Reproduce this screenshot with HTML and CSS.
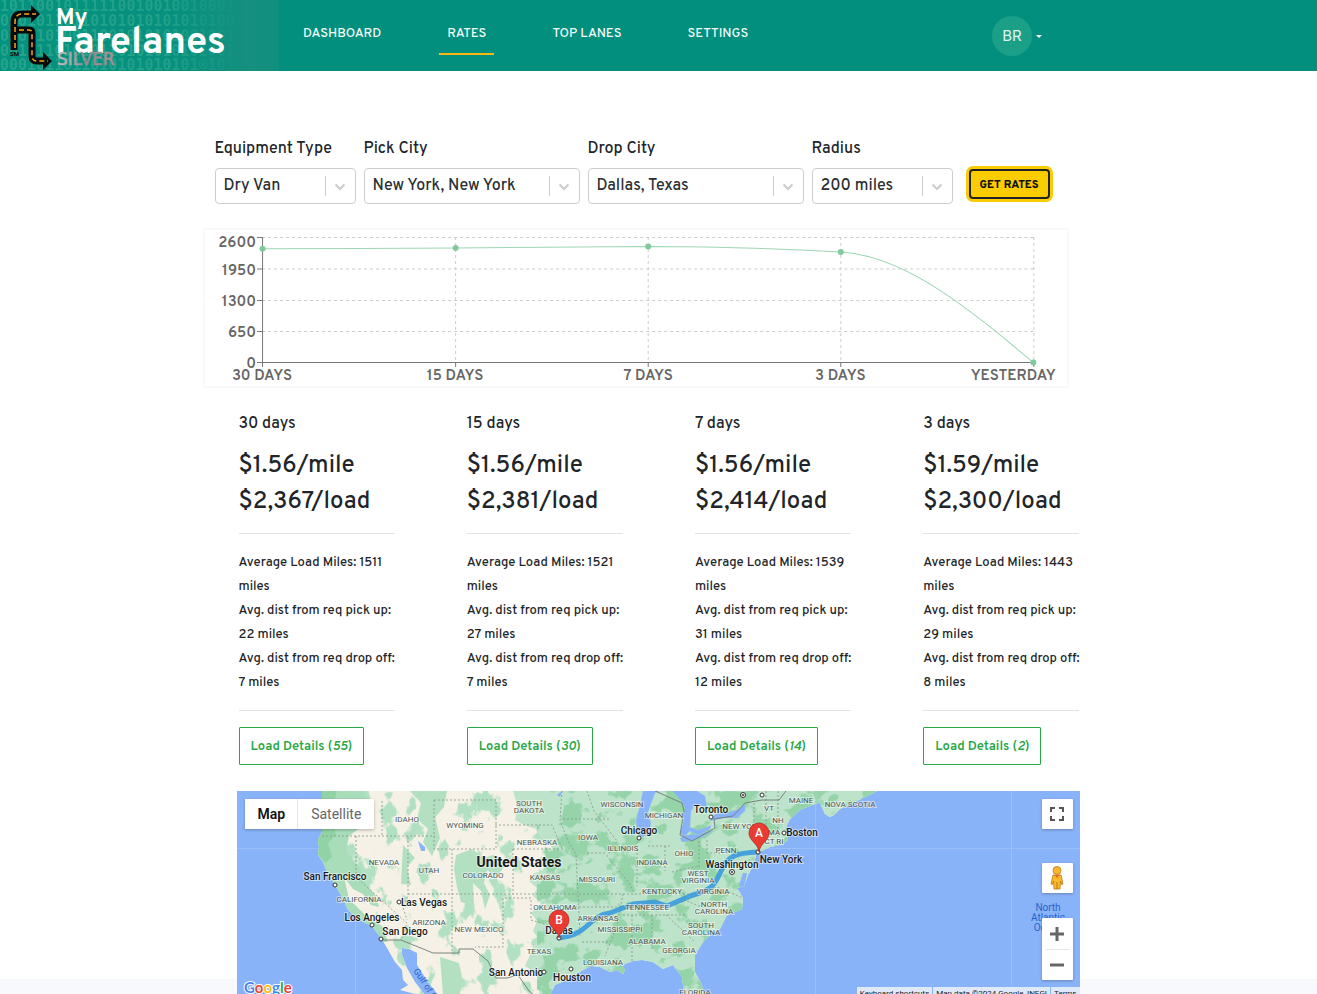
FILE: index.html
```html
<!DOCTYPE html>
<html lang="en">
<head>
<meta charset="utf-8">
<meta name="viewport" content="width=device-width, initial-scale=1">
<title>My Farelanes - Rates</title>
<link rel="stylesheet" href="styles.css">
</head>
<body>
<header class="topbar">
  <a class="brand" href="#" aria-label="My Farelanes Silver">
    <svg class="brand-art" viewBox="0 0 279 71" width="279" height="71">
      <defs>
        <linearGradient id="fade" x1="0" x2="279" gradientUnits="userSpaceOnUse">
          <stop offset="0" stop-color="#fff" stop-opacity=".9"/><stop offset=".6" stop-color="#fff" stop-opacity=".75"/>
          <stop offset=".88" stop-color="#fff" stop-opacity="0"/>
        </linearGradient>
        <linearGradient id="panel"><stop offset="0" stop-color="#03937f"/><stop offset=".65" stop-color="#07907e"/><stop offset=".9" stop-color="#158f80"/><stop offset="1" stop-color="#108f7f"/></linearGradient>
        <linearGradient id="silver"><stop offset="0" stop-color="#c9bfc2"/><stop offset=".5" stop-color="#8f8b91"/><stop offset="1" stop-color="#b08d94"/></linearGradient>
        <mask id="fademask"><rect width="279" height="71" fill="url(#fade)"/></mask>
      </defs>
      <rect width="279" height="71" fill="url(#panel)"/>
      <g class="bits" mask="url(#fademask)">
        <text x="0" y="11">10110010111110010010010001</text>
        <text x="0" y="26">01010110110101010101010100</text>
        <text x="0" y="41">01001010011001010101001001</text>
        <text x="0" y="56">00101101010110101010101001</text>
        <text x="0" y="70">0001011011010101010101®101</text>
      </g>
      <g fill="none" stroke="#080808" stroke-width="7">
        <path d="M14 50V22Q14 14 22 14H33"/><path d="M17 30H29Q32 30 32 33V56Q32 61 37 61H45"/>
      </g>
      <path d="M31 5 40 14 31 23ZM43 52 52 61 43 70Z" fill="#080808"/>
      <g fill="none" stroke="#f5a81c" stroke-width="1.5" stroke-dasharray="5 3">
        <path d="M15 48V22Q15 14 22 14H36"/><path d="M19 30H29Q32 30 32 33V56Q32 61 37 61H48"/>
      </g>
      <text class="sm" x="10" y="56">SM</text>
      <text class="word" x="56" y="24" font-size="23">My</text>
      <text class="word" x="55" y="53" font-size="38">Farelanes</text>
      <text class="silver" x="57" y="65">SILVER</text>
    </svg>
  </a>
  <nav class="nav">
    <a href="#">DASHBOARD</a>
    <a href="#" class="active" aria-current="page">RATES</a>
    <a href="#">TOP LANES</a>
    <a href="#">SETTINGS</a>
  </nav>
  <button class="account" type="button" aria-label="Account BR"><span class="avatar">BR</span><span class="caret"></span></button>
</header>

<main class="page">
  <div class="content">
    <form class="filters">
      <div class="field"><label for="equipment">Equipment Type</label>
        <div class="pick"><select id="equipment"><option>Dry Van</option></select><svg viewBox="0 0 12 8"><path d="M1.500 1.500 6 6 10.500 1.500"/></svg></div></div>
      <div class="field wide"><label for="pickup">Pick City</label>
        <div class="pick"><select id="pickup"><option>New York, New York</option></select><svg viewBox="0 0 12 8"><path d="M1.500 1.500 6 6 10.500 1.500"/></svg></div></div>
      <div class="field wide"><label for="drop">Drop City</label>
        <div class="pick"><select id="drop"><option>Dallas, Texas</option></select><svg viewBox="0 0 12 8"><path d="M1.500 1.500 6 6 10.500 1.500"/></svg></div></div>
      <div class="field"><label for="radius">Radius</label>
        <div class="pick"><select id="radius"><option>200 miles</option></select><svg viewBox="0 0 12 8"><path d="M1.500 1.500 6 6 10.500 1.500"/></svg></div></div>
      <button class="get" type="button">GET RATES</button>
    </form>

    <section class="chart" aria-label="Rate history">
      <svg viewBox="0 0 862 156">
        <path class="grid" d="M57 7.500H828M57 39H828M57 70.500H828M57 101.500H828M250.500 7V132M443 7V132M635.500 7V132M828.500 7V132"/>
        <path class="axis" d="M57.500 7V137M52 132.500H828M52 7.500H57M52 39H57M52 70.500H57M52 101.500H57M250.500 132V137M443 132V137M635.500 132V137M828.500 132V137"/>
        <path class="line" d="M57.500 18.700C122 18.700 186 18.400 250.500 18S379 16.400 443 16.400 571 18.300 635.500 22C700 25.700 764 79 828 132.500"/>
        <g class="dots"><circle cx="57.500" cy="18.700" r="3"/><circle cx="250.500" cy="18" r="3"/><circle cx="443" cy="16.400" r="3"/><circle cx="635.500" cy="22" r="3"/><circle cx="828" cy="132.500" r="3"/></g>
        <g class="ylab"><text x="51" y="17">2600</text><text x="51" y="45">1950</text><text x="51" y="76">1300</text><text x="51" y="107">650</text><text x="51" y="138">0</text></g>
        <g class="xlab"><text x="57" y="150">30 DAYS</text><text x="250" y="150">15 DAYS</text><text x="443" y="150">7 DAYS</text><text x="635" y="150">3 DAYS</text><text x="808" y="150">YESTERDAY</text></g>
      </svg>
    </section>

    <section class="cards">
      <article class="card"><h2>30 days</h2><p class="price">$1.56/mile<br>$2,367/load</p>
        <p class="facts">Average Load Miles: 1511<br>miles<br>Avg. dist from req pick up:<br>22 miles<br>Avg. dist from req drop off:<br>7 miles</p>
        <button type="button">Load Details (<em>55</em>)</button></article>
      <article class="card"><h2>15 days</h2><p class="price">$1.56/mile<br>$2,381/load</p>
        <p class="facts">Average Load Miles: 1521<br>miles<br>Avg. dist from req pick up:<br>27 miles<br>Avg. dist from req drop off:<br>7 miles</p>
        <button type="button">Load Details (<em>30</em>)</button></article>
      <article class="card"><h2>7 days</h2><p class="price">$1.56/mile<br>$2,414/load</p>
        <p class="facts">Average Load Miles: 1539<br>miles<br>Avg. dist from req pick up:<br>31 miles<br>Avg. dist from req drop off:<br>12 miles</p>
        <button type="button">Load Details (<em>14</em>)</button></article>
      <article class="card"><h2>3 days</h2><p class="price">$1.59/mile<br>$2,300/load</p>
        <p class="facts">Average Load Miles: 1443<br>miles<br>Avg. dist from req pick up:<br>29 miles<br>Avg. dist from req drop off:<br>8 miles</p>
        <button type="button">Load Details (<em>2</em>)</button></article>
    </section>

    <section class="map" aria-label="Route map">
      <svg class="map-art" viewBox="0 0 843 210" preserveAspectRatio="xMidYMid slice">
        <defs>
          <clipPath id="land">
            <path d="M85 0V41L81 49 82 56 81 64 86 71 90 81 98 94 105 106 111 119 121 128 135 135 144 147 150 157 158 171 165 179 166 189 171 194 163 199 178 203 184 210H188V204L178 191 170 177 165 164V157L172 158 180 162V174L191 191 202 205 206 210H312L313 204 318 194 330 189 346 179 354 175 363 176 373 181 380 179 386 183 388 179 385 174 396 170 405 169 416 171 426 178 436 174 445 186 446 194 450 210H467L465 194 458 181V164L466 151 474 143 483 138 490 124 498 121 505 118 506 107 500 97 507 95 511 84 515 77 520 62 533 56 544 54 551 49 548 38 553 28 563 19 575 14 581 12 582 10 588 23 593 26 597 24 603 18 618 11 630 5 640 0Z"/>
          </clipPath>
          <filter id="veg" x="0" y="0" width="100%" height="100%" color-interpolation-filters="sRGB"><feTurbulence type="fractalNoise" baseFrequency=".04 .045" numOctaves="4" seed="8"/><feColorMatrix values="0 0 0 0 .58  0 0 0 0 .83  0 0 0 0 .66  14 0 0 0 -7.100"/></filter>
          <filter id="west" x="0" y="0" width="100%" height="100%" color-interpolation-filters="sRGB"><feTurbulence type="fractalNoise" baseFrequency=".05 .035" numOctaves="4" seed="21"/><feColorMatrix values="0 0 0 0 .70  0 0 0 0 .88  0 0 0 0 .76  14 0 0 0 -8"/></filter>
        </defs>
        <rect width="843" height="210" fill="#89b3f8"/>
        <path class="tile" d="M0 57.500H843M578.500 0V210M774.500 0V210M118.500 0V210"/>
        <g clip-path="url(#land)">
          <rect width="660" height="210" fill="#f5f1e6"/>
          <rect width="330" height="210" filter="url(#west)"/>
          <path d="M276 0 281 16 278 29 287 34 299 38 305 49 314 55 318 63 310 70 308 80 297 82 292 90 300 97 296 105 304 112 294 122 300 130 296 140 301 147 295 158 292 166 288 175 301 184 303 210H660V0Z" fill="#bde3ca"/>
          <path d="M81 0H126L131 12 121 22 125 35 112 45 109 60 123 77 127 91 139 105 142 116 134 114 126 103 116 98 107 86 112 108 130 126 145 135 151 151 144 151 130 137 109 126 78 81Z" fill="#a9ddba"/>
          <path d="M81 0H100L96 14 104 20 96 31 99 44 91 52 95 66 88 72 78 60Z" fill="#92d3a6"/>
          <path d="M173 0H210L207 16 198 26 203 47 195 65 186 51 191 38 180 28 184 12ZM219 64 235 58 247 67 256 64 270 71 260 86 250 79 247 92 253 104 248 118 244 100 236 92 237 115 224 111 220 96 217 78ZM203 166 222 172 226 190 221 210 206 204ZM166 54 178 67 170 76 174 94 164 93Z" fill="#b3e0c0"/>
          <rect x="300" width="360" height="210" filter="url(#veg)"/>
          <path d="M406 0 403 14 399 30 400 41 403 46 411 44 414 33 411 21 418 2 423 0ZM436 0 445 11 448 17 446 33 443 42 447 46 453 40 461 44 473 40 474 34 468 37 460 39 453 36 454 20 458 14 470 16 468 5 460 0ZM443 47 450 44 463 43 473 38 474 41 463 47 453 50 445 51ZM473 30 478 23 490 22 502 18 508 13 508 20 500 27 487 27ZM506 82 510 82 508 92 505 100 502 94ZM181 50 188 56 188 60 184 60ZM325 0 323 6 320 4Z" fill="#89b3f8"/>
          <path class="state" d="M85 45H198M145 10V45M119 45V86L170 132 164 149M171 46V104L166 116 170 129M197 9H259V58H197ZM215 58V160M171 103H338M276 58V103M266 107V156H238M258 34H315L325 57M268 107H294V129L340 143M276 58H326M325 0 323 29 331 50 339 63 343 145M326 28H372M350 62H368M350 0 357 20 380 50 370 65 392 92 398 103M338 103H480M338 116H385M386 103 380 135 368 165M395 124V170M415 124V160M386 124H450M428 55V80M411 55H435M400 50V95M462 50V76M435 81 462 75M470 49V62H519M440 113 480 96 506 107M429 124 458 151M450 110 480 122M345 151H373M517 12V49M529 0V45M541 0V45M517 44H545"/>
          <path class="border" d="M144 149H164L196 162H222V158H236L251 170 259 187 270 187 281 184 292 200 300 207M418 0 445 12 447 20 443 44 455 50 478 37 477 28 496 25 508 12 525 9H542L549 0"/>
        </g>
        <path class="route" d="M521 61C500 62 491 64 484 80S474 99 453 105L430 115 418 111 396 113 373 122C350 125 354 143 322 147"/>
        <g class="region">
          <text x="170" y="31">IDAHO</text><text x="228" y="37">WYOMING</text><text x="292" y="15">SOUTH</text><text x="292" y="22">DAKOTA</text><text x="385" y="16">WISCONSIN</text><text x="427" y="27">MICHIGAN</text>
          <text x="147" y="74">NEVADA</text><text x="192" y="82">UTAH</text><text x="246" y="87">COLORADO</text><text x="300" y="54">NEBRASKA</text><text x="351" y="49">IOWA</text><text x="386" y="60">ILLINOIS</text><text x="447" y="65">OHIO</text><text x="415" y="74">INDIANA</text><text x="308" y="89">KANSAS</text><text x="360" y="91">MISSOURI</text>
          <text x="122" y="111">CALIFORNIA</text><text x="192" y="134">ARIZONA</text><text x="242" y="141">NEW MEXICO</text><text x="318" y="119">OKLAHOMA</text><text x="361" y="130">ARKANSAS</text><text x="425" y="103">KENTUCKY</text><text x="410" y="119">TENNESSEE</text><text x="383" y="141">MISSISSIPPI</text><text x="410" y="153">ALABAMA</text><text x="442" y="162">GEORGIA</text><text x="366" y="174">LOUISIANA</text><text x="302" y="163">TEXAS</text><text x="458" y="204">FLORIDA</text>
          <text x="461" y="85">WEST</text><text x="461" y="92">VIRGINIA</text><text x="476" y="103">VIRGINIA</text><text x="477" y="116">NORTH</text><text x="477" y="123">CAROLINA</text><text x="464" y="137">SOUTH</text><text x="464" y="144">CAROLINA</text><text x="489" y="62">PENN</text><text x="505" y="38">NEW YORK</text><text x="532" y="20">VT</text><text x="541" y="32">NH</text><text x="537" y="44">MA</text><text x="537" y="53">CT RI</text><text x="564" y="12">MAINE</text><text x="613" y="16">NOVA SCOTIA</text>
        </g>
        <g class="city">
          <text x="98" y="89">San Francisco</text><text x="187" y="115">Las Vegas</text><text x="135" y="130">Los Angeles</text><text x="168" y="144">San Diego</text><text x="279" y="185">San Antonio</text><text x="335" y="190">Houston</text><text x="322" y="143">Dallas</text><text x="402" y="43">Chicago</text><text x="474" y="22">Toronto</text><text x="495" y="77">Washington</text><text x="544" y="72">New York</text><text x="565" y="45">Boston</text>
          <text class="country" x="282" y="76">United States</text>
        </g>
        <g class="spots"><circle cx="98" cy="94" r="2"/><circle cx="162" cy="111" r="2"/><circle cx="135" cy="134" r="2"/><circle cx="144" cy="148" r="2"/><circle cx="307" cy="181" r="2"/><circle cx="334" cy="178" r="2"/><circle cx="402" cy="47" r="2"/><circle cx="474" cy="26" r="2"/><circle cx="547" cy="42" r="2"/><circle cx="525" cy="4" r="2"/><circle cx="506" cy="4" r="2.500"/><circle cx="506" cy="4" r=".7"/><circle cx="495" cy="81" r="2.500"/><circle cx="495" cy="81" r=".7"/><circle cx="521" cy="61" r="2"/><circle cx="322" cy="147" r="2"/></g>
        <g class="sea"><text x="811" y="120">North</text><text x="811" y="130">Atlantic</text><text x="811" y="140">Ocean</text><text class="gulf" transform="translate(176 180) rotate(56)">Gulf of California</text></g>
        <g class="pin"><path d="M522 61C521 52 512 50 512 42A10 10 0 0 1 532 42C532 50 523 52 522 61Z"/><path d="M322 147C321 139 312 137 312 129A10 10 0 0 1 332 129C332 137 323 139 322 147Z"/><text x="522" y="46">A</text><text x="322" y="133">B</text></g>
        <g class="google"><text x="7" y="202"><tspan fill="#4285f4">G</tspan><tspan fill="#ea4335">o</tspan><tspan fill="#fbbc05">o</tspan><tspan fill="#4285f4">g</tspan><tspan fill="#34a853">l</tspan><tspan fill="#ea4335">e</tspan></text></g>
      </svg>
      <div class="types"><button type="button" class="on">Map</button><button type="button">Satellite</button></div>
      <div class="tools">
        <button type="button" class="tool" aria-label="Full screen"><svg viewBox="0 0 14 14" width="14" height="14"><path d="M1 5V1H5M9 1H13V5M13 9V13H9M5 13H1V9" fill="none" stroke="#555" stroke-width="2"/></svg></button>
        <button type="button" class="tool person" aria-label="Street view"><svg viewBox="0 0 14 24" width="14" height="24"><path d="M3 9H11L13 18 11.500 18.500 10.500 15 10 23H4L3.500 15 2.500 18.500 1 18Z" fill="#fbb829" stroke="#b77a1b" stroke-width=".8"/><circle cx="7" cy="4.500" r="4" fill="#fbb829" stroke="#b77a1b" stroke-width=".8"/><path d="M4.500 9 7 12 9.500 9Z" fill="#e8672c"/><path d="M7 16V23" stroke="#b77a1b"/></svg></button>
        <div class="zoom"><button type="button" aria-label="Zoom in"><svg viewBox="0 0 14 14" width="14" height="14"><path d="M7 0V14M0 7H14" stroke="#666" stroke-width="3"/></svg></button><button type="button" aria-label="Zoom out"><svg viewBox="0 0 14 14" width="14" height="14"><path d="M0 7H14" stroke="#666" stroke-width="3"/></svg></button></div>
      </div>
      <div class="credits"><button type="button">Keyboard shortcuts</button><span>Map data ©2024 Google, INEGI</span><a href="#">Terms</a></div>
    </section>
  </div>
</main>
</body>
</html>
```
FILE: styles.css
```css
* { box-sizing: border-box; }
body { margin: 0; height: 100vh; overflow: hidden; background: #f8f9fc; color: #212529; font-family: Overpass, Roboto, sans-serif; font-weight: 500; }
button, select { font: inherit; color: inherit; }
button { cursor: pointer; }

.topbar { display: flex; align-items: flex-start; background: #028f7d; height: 71px; }
.brand, .brand-art { display: block; }
.bits text { font: bold 15px "DejaVu Sans Mono", monospace; fill: #2aa58d; }
.sm { font: bold 6px Roboto, sans-serif; fill: #080808; }
.word { font-family: Overpass, Roboto, sans-serif; font-weight: 700; fill: #fff; }
.silver { font: 17px "DejaVu Sans", sans-serif; fill: url(#silver); stroke: url(#silver); stroke-width: .5px; }
.nav { display: flex; gap: 50px; margin: 11px 0 0 16px; }
.nav a { padding: 14px 8px 10px; border-bottom: 2px solid transparent; color: #f1faf8; font-size: 13px; line-height: 18px; text-decoration: none; white-space: nowrap; }
.nav .active { border-color: #fdb714; }
.account { display: flex; align-items: center; gap: 4px; margin: 16px 275px 0 auto; padding: 0; border: 0; background: none; }
.avatar { width: 40px; height: 40px; border-radius: 50%; background: #1b9f87; color: #e0f4ef; font: 15px/40px Inter, sans-serif; }
.caret { border: 3px solid transparent; border-top-color: #fff; border-bottom: 0; }

.page { height: calc(100vh - 86px); background: #fff; }
.content { max-width: 912px; margin: 0 auto; padding-top: 66px; }
.filters { display: flex; gap: 8px; align-items: flex-end; padding: 0 65px 0 12px; }
.field { flex: 141 1 0; min-width: 0; }
.wide { flex-grow: 216; }
.field label { display: block; margin-bottom: 7px; font-size: 16px; line-height: 24px; }
.pick { position: relative; }
.pick select { display: block; width: 100%; height: 36px; padding: 0 38px 0 8px; border: 1px solid #ccc; border-radius: 4px; background: #fff; color: #2b2f33; appearance: none; font-size: 16px; }
.pick::after { content: ""; position: absolute; top: 8px; bottom: 8px; right: 30px; width: 1px; background: #ccc; }
.pick svg { position: absolute; right: 10px; top: 15px; width: 12px; height: 8px; fill: none; stroke: #ccc; stroke-width: 2; }
.get { flex: none; width: 81px; height: 30px; margin: 0 0 5px 8px; padding: 2px 0 0; border: 2px solid #222; border-radius: 4px; background: #fbcc00; box-shadow: 0 0 0 3px #fbcc00; color: #111; font-size: 11px; font-weight: 800; white-space: nowrap; }

.chart { width: 95%; margin-top: 24px; border: 2px solid #f8f8ff; }
.chart svg { display: block; width: 100%; }
.grid { fill: none; stroke: #ccc; stroke-dasharray: 3 3; }
.axis { fill: none; stroke: #777; }
.line { fill: none; stroke: #9dd6b3; }
.dots { fill: #82ca9d; }
.ylab, .xlab { fill: #666; font-weight: 600; }
.ylab { text-anchor: end; font-size: 15px; }
.xlab { text-anchor: middle; font-size: 15px; }

.cards { display: grid; grid-template-columns: repeat(4, 1fr); margin-top: 24px; }
.card { padding: 0 36px; }
.card h2 { margin: 0 0 12px; font-size: 16px; line-height: 24px; font-weight: 500; }
.price { margin: 0; padding-bottom: 13px; font-size: 24px; line-height: 36px; }
.facts { margin: 0 0 16px; padding: 17px 0 15px; border: solid #e2e3e4; border-width: 1px 0; font-size: 13px; line-height: 24px; white-space: nowrap; }
.card button { height: 38px; padding: 2px 11px 0; border: 1px solid #28a745; border-radius: 1px; background: #fff; color: #28a745; font-size: 13px; font-weight: 600; white-space: nowrap; }

.map { position: relative; height: 210px; margin: 26px 35px 0 34px; overflow: hidden; font-family: Roboto, sans-serif; }
.map-art { display: block; width: 100%; height: 100%; }
.tile { stroke: #9abef8; fill: none; }
.state { fill: none; stroke: #87958b; stroke-width: .8px; stroke-dasharray: 2 2; }
.border { fill: none; stroke: #717b78; stroke-width: .9px; }
.route { fill: none; stroke: #3497df; stroke-opacity: .85; stroke-width: 5px; stroke-linecap: round; stroke-linejoin: round; }
.region text, .city text { text-anchor: middle; paint-order: stroke; stroke: #fff; stroke-opacity: .5; stroke-width: 2px; }
.region text { font-size: 8px; font-weight: 400; fill: #4b5553; }
.city text { font-size: 10px; fill: #17191b; }
.city .country { font-size: 14px; font-weight: 700; }
.spots { fill: #fff; stroke: #333; stroke-width: 1px; }
.sea text { font-size: 10px; font-weight: 400; fill: #2464cd; text-anchor: middle; }
.sea .gulf { font-size: 9px; text-anchor: start; }
.pin { fill: #e93b32; stroke: #b52a23; stroke-width: .8px; }
.pin text { fill: #fff; stroke: none; font-size: 12px; text-anchor: middle; }
.google text { font: 700 15px Lato, sans-serif; stroke: #fff; stroke-width: 2px; paint-order: stroke; }
.types { position: absolute; left: 8px; top: 8px; display: flex; background: #fff; box-shadow: 0 1px 3px #0004; }
.types button { height: 30px; padding: 0 13px; border: 0; background: none; color: #666; font-size: 14px; font-weight: 400; }
.types .on { padding-right: 12px; border-right: 1px solid #e6e6e6; color: #111; font-weight: 600; }
.tools { position: absolute; right: 7px; top: 8px; width: 31px; }
.tool, .zoom { display: flex; align-items: center; justify-content: center; width: 31px; height: 30px; padding: 0; border: 0; border-radius: 1px; background: #fff; box-shadow: 0 1px 3px #0004; }
.person { margin: 34px 0 25px; }
.zoom { flex-direction: column; height: 62px; }
.zoom button { display: flex; align-items: center; justify-content: center; width: 23px; height: 31px; padding: 0; border: 0; background: none; }
.zoom button + button { border-top: 1px solid #e6e6e6; }
.credits { position: absolute; right: 0; bottom: 0; display: flex; gap: 1px; font-size: 8px; font-weight: 400; line-height: 14px; color: #222; }
.credits > * { padding: 0 3px; border: 0; background: #dfe9fa; color: #222; text-decoration: none; }
```
